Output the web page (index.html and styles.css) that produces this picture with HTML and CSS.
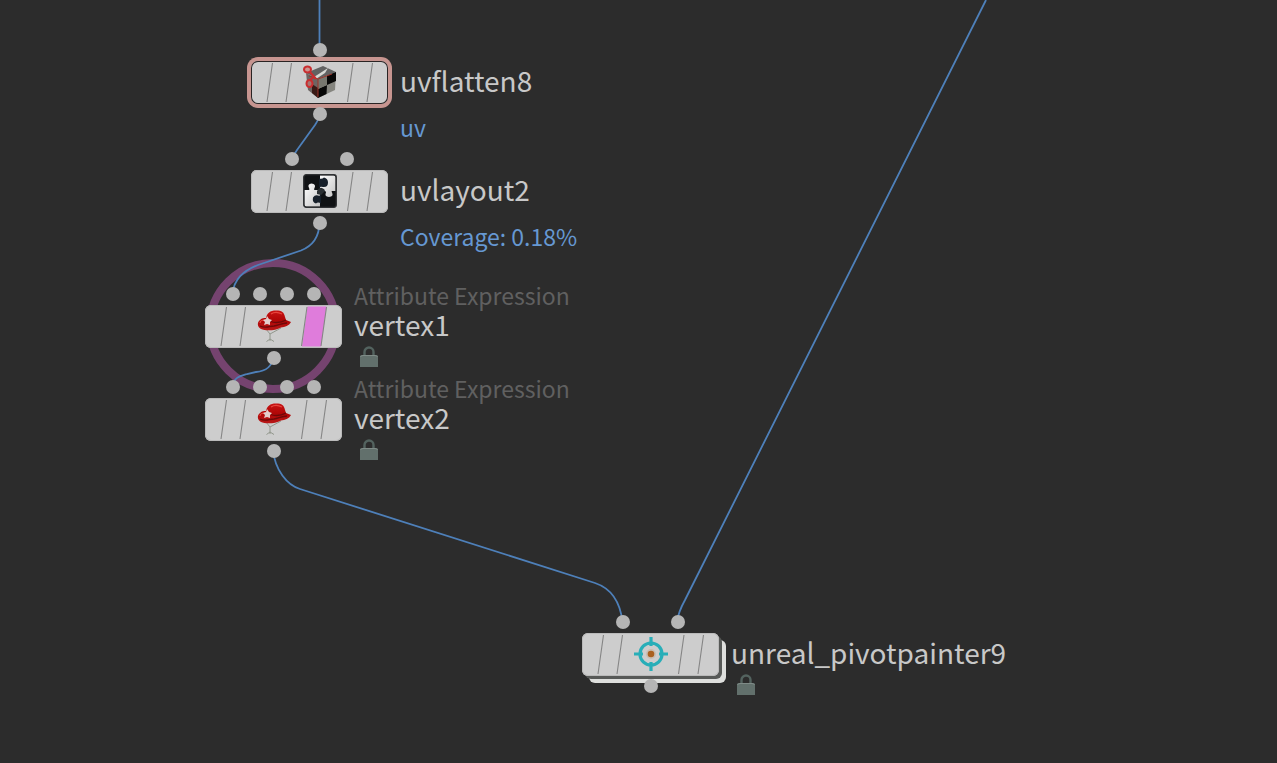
FILE: index.html
```html
<!DOCTYPE html>
<html lang="en">
<head>
<meta charset="utf-8">
<title>Network Editor</title>
<link rel="stylesheet" href="styles.css">
</head>
<body>
<svg class="defs" aria-hidden="true">
  <defs>
    <linearGradient id="felt" x1="0" y1="0" x2="0" y2="1">
      <stop offset="0" stop-color="#c81414"/><stop offset="0.5" stop-color="#b00606"/><stop offset="1" stop-color="#b81818"/>
    </linearGradient>
    <linearGradient id="shade" x1="0" y1="0" x2="1" y2="1">
      <stop offset="0" stop-color="#ffffff"/><stop offset="1" stop-color="#c4c4c4"/>
    </linearGradient>
    <symbol id="flags" viewBox="0 0 137 43">
      <path d="M21.5 2 16 41M40.5 2 35 41M102 2 96.500 41M121.500 2 116 41" fill="none" stroke="#858585" stroke-width="1.1"/>
    </symbol>
    <symbol id="hat" viewBox="0 0 34 34">
      <path d="M9 20 13 25 24 19M13 25v7M9.500 32.500 13 30l4 2.500" fill="none" stroke="#92978c" stroke-width="1"/>
      <path d="M9 9C10 4 13 1.500 19 1.500 25 1.500 27 3 28 8L29 11 34 13C32 17 28 18 24 18.500 18 22 8 22 4 20 0 18 0 13 3 11 5 9 7 9 9 9z" fill="url(#felt)"/>
      <path d="M11 10c3 5 13 4 18 1M3 17c6 3 9 0 14 0 5-1 8-3 13-3" fill="none" stroke="#6d0808" stroke-width="1.300"/>
      <path d="M14 5c3-2 7-2 11 0M3 14C3 12 5 11 8 11" fill="none" stroke="#e8463e" stroke-width="1.200"/>
      <path d="M10 7l2 3 3 1-2 2 0 3-3-1-3 1 1-3-2-2 3-1z" fill="#e4cdcb"/>
    </symbol>
    <symbol id="cube" viewBox="0 0 34 34">
      <path d="M3 8 20 1 33 7 15 14z" fill="#626262"/>
      <path d="M3 8 15 14 15 33 5 25z" fill="#6d6563"/>
      <path d="M15 14 33 7 32 25 15 33z" fill="#85857f"/>
      <path d="M24 10.500 33 7 33 16 24 20zM15 24 24 20 23.500 29 15 33z" fill="#070707"/>
      <path d="M15 14 24 10.500 24 20 15 24z" fill="#77776f"/>
      <path d="M9 19 15 23 15 33 9 28z" fill="#391a16"/>
      <path d="M11 12 25 3 22 8 13 14z" fill="#d8d8d4"/>
      <path d="M6 11 15 14 29 9M15 14v18" fill="none" stroke="#a13329" stroke-width="1"/>
      <ellipse cx="4.500" cy="4.500" rx="3.500" ry="3" fill="#cc9590" stroke="#c92e30" stroke-width="2"/>
      <ellipse cx="6.500" cy="18.500" rx="3" ry="3.500" fill="#a77572" stroke="#c92e30" stroke-width="2"/>
      <path d="M7 7 13 14M7 15 12 11" fill="none" stroke="#c92e30" stroke-width="2.200"/>
    </symbol>
    <symbol id="puzzle" viewBox="0 0 34 34">
      <rect x="0.700" y="0.700" width="32.600" height="32.600" rx="2.500" fill="#101214"/>
      <path d="M17 1.500H30.500Q32.500 1.500 32.500 3.500V17H29q-1 .5 0 1.500 2 4-3 4.500-5-.5-3-4.500 0-1.500-1-1.500H17z" fill="url(#shade)"/>
      <path d="M1.500 16H6q1-.5 0-2-2-4 2.500-4.500 5 .5 3 4.500-1 1.500 0 2H17V32.500H3.500Q1.500 32.500 1.500 30.500z" fill="url(#shade)"/>
      <path d="M16 4.500q3 1 5-1 4 1 4 5 0 5-5 4.500-3-1-4 1zM18 29.500q-3-2-5 0-4-1-3-6 2-3 5-2 2 1 3-1z" fill="#17202a"/>
      <path d="M14 17q2-4 5-3 3 1 3 3l-4 4-4-1z" fill="#2b3033"/>
      <rect x="0.700" y="0.700" width="32.600" height="32.600" rx="2.500" fill="none" stroke="#303234" stroke-width="1.300"/>
    </symbol>
    <symbol id="pivot" viewBox="0 0 34 34">
      <circle cx="17" cy="17" r="11" fill="none" stroke="#28aeb8" stroke-width="3.200"/>
      <path d="M17 0V9M17 25V34M0 17H9M25 17H34" stroke="#28aeb8" stroke-width="3.200"/>
      <circle cx="17" cy="17" r="5" fill="#c8bdb1"/>
      <circle cx="17" cy="17" r="3.300" fill="#aa6120"/>
    </symbol>
    <symbol id="lock" viewBox="0 0 18 21">
      <path d="M4.500 10V6a4.500 4.500 0 0 1 9 0v4" fill="none" stroke="#53635f" stroke-width="2.400"/>
      <path d="M0 10.500Q0 9 1.500 9h15Q18 9 18 10.500V21H0z" fill="#62706c"/>
      <path d="M.5 11Q1 9.500 3 9.500H15Q17 9.500 17.500 11" fill="none" stroke="#7f8b87" stroke-width="1"/>
    </symbol>
  </defs>
</svg>

<main class="network">
  <svg class="wires" aria-hidden="true">
    <circle class="ring" cx="273" cy="326" r="63"/>
    <path d="M319.500 0V51"/>
    <path d="M319.500 115C319 120 317 122 315 125L297 150C294 154 293 156 292 160"/>
    <path d="M319.500 223C319 240 310 247 301 250.500L258 265C243 271 234 279 232.500 294"/>
    <path d="M273 358C272 366 266 371 256 372L247 374C240 376 234 377 232 387"/>
    <path d="M273 450C275 470 287 485 300 489L595 583C610 588 620 600 622.500 622"/>
    <path d="M986 0L685 600C680 609 678 614 677 622"/>
  </svg>

  <article class="node uvflatten8">
    <div class="ports in"><i class="port"></i></div>
    <div class="tile selected">
      <svg class="flags"><use href="#flags"/></svg>
      <svg class="icon"><use href="#cube"/></svg>
    </div>
    <div class="ports out"><i class="port"></i></div>
    <div class="label"><h2 class="name">uvflatten8</h2><p class="info">uv</p></div>
  </article>

  <article class="node uvlayout2">
    <div class="ports in pair"><i class="port"></i><i class="port"></i></div>
    <div class="tile">
      <svg class="flags"><use href="#flags"/></svg>
      <svg class="icon"><use href="#puzzle"/></svg>
    </div>
    <div class="ports out"><i class="port"></i></div>
    <div class="label"><h2 class="name">uvlayout2</h2><p class="info">Coverage: 0.18%</p></div>
  </article>

  <article class="node vertex1">
    <div class="ports in quad"><i class="port"></i><i class="port"></i><i class="port"></i><i class="port"></i></div>
    <div class="tile">
      <svg class="flags" viewBox="0 0 137 43"><path d="M102.500 1.500H121.500L116 41.500H97z" fill="#df7cdb"/><use href="#flags"/></svg>
      <svg class="icon"><use href="#hat"/></svg>
    </div>
    <div class="ports out"><i class="port"></i></div>
    <div class="label"><p class="type">Attribute Expression</p><h2 class="name">vertex1</h2><svg class="lock" role="img" aria-label="Locked"><use href="#lock"/></svg></div>
  </article>

  <article class="node vertex2">
    <div class="ports in quad"><i class="port"></i><i class="port"></i><i class="port"></i><i class="port"></i></div>
    <div class="tile">
      <svg class="flags"><use href="#flags"/></svg>
      <svg class="icon"><use href="#hat"/></svg>
    </div>
    <div class="ports out"><i class="port"></i></div>
    <div class="label"><p class="type">Attribute Expression</p><h2 class="name">vertex2</h2><svg class="lock" role="img" aria-label="Locked"><use href="#lock"/></svg></div>
  </article>

  <article class="node pivotpainter9">
    <div class="ports in pair"><i class="port"></i><i class="port"></i></div>
    <div class="tile stacked">
      <svg class="flags"><use href="#flags"/></svg>
      <svg class="icon"><use href="#pivot"/></svg>
    </div>
    <div class="ports out"><i class="port"></i></div>
    <div class="label"><h2 class="name">unreal_pivotpainter9</h2><svg class="lock" role="img" aria-label="Locked"><use href="#lock"/></svg></div>
  </article>
</main>
</body>
</html>
```
FILE: styles.css
```css
* { box-sizing: border-box; }

body {
  margin: 0;
  background: #2c2c2c;
  font-family: "Noto Sans CJK SC", "Noto Sans", sans-serif;
}

.defs { position: absolute; width: 0; height: 0; }

.network {
  position: relative;
  min-height: 100vh;
  overflow: hidden;
}

.wires {
  position: absolute;
  inset: 0;
  width: 100%;
  height: 100%;
}

.wires path { fill: none; stroke: #4e80ba; stroke-width: 1.8; }
.wires .ring { fill: none; stroke: #75436f; stroke-width: 8; }

.node { position: absolute; width: 137px; }

.uvflatten8 { left: 251px; top: 61px; }
.uvlayout2 { left: 251px; top: 170px; }
.vertex1 { left: 205px; top: 305px; }
.vertex2 { left: 205px; top: 398px; }
.pivotpainter9 { left: 582px; top: 633px; }

.tile {
  position: relative;
  display: flex;
  justify-content: center;
  padding: 4px 0 5px;
  border-radius: 6px;
  background: #cdcdcd;
  box-shadow: inset 0 0 0 1px #bababa;
}

.flags { position: absolute; inset: 0; width: 100%; height: 100%; }
.icon { position: relative; width: 34px; height: 34px; }

.selected { box-shadow: inset 0 0 0 1px #2a2424, 0 0 0 4px #c79590; border-radius: 7px; }
.stacked { box-shadow: inset 0 0 0 1px #bababa, 3px 3px 0 #575957, 7px 7px 0 #dedfdd; }

.ports {
  position: absolute;
  left: 0;
  right: 0;
  display: flex;
  justify-content: center;
}

.in { top: -18px; }
.out { top: 46px; }
.pair { gap: 41px; }
.quad { gap: 13px; }

.port {
  width: 14px;
  height: 14px;
  border-radius: 50%;
  background: #b5b5b5;
}

.label {
  position: absolute;
  left: 149px;
  top: -24px;
  display: grid;
  grid-template-rows: 29px 29px auto;
  white-space: nowrap;
}

.name, .type, .info { margin: 0; font-weight: 400; }
.name { grid-row: 2; font-size: 28px; line-height: 29px; color: #c8c8c8; }
.type { grid-row: 1; font-size: 23px; line-height: 29px; color: #606060; }
.info { grid-row: 3; margin-top: 18px; font-size: 23px; line-height: 29px; color: #6698d2; }
.lock { grid-row: 3; width: 18px; height: 21px; margin: 7px 0 0 6px; }
```
